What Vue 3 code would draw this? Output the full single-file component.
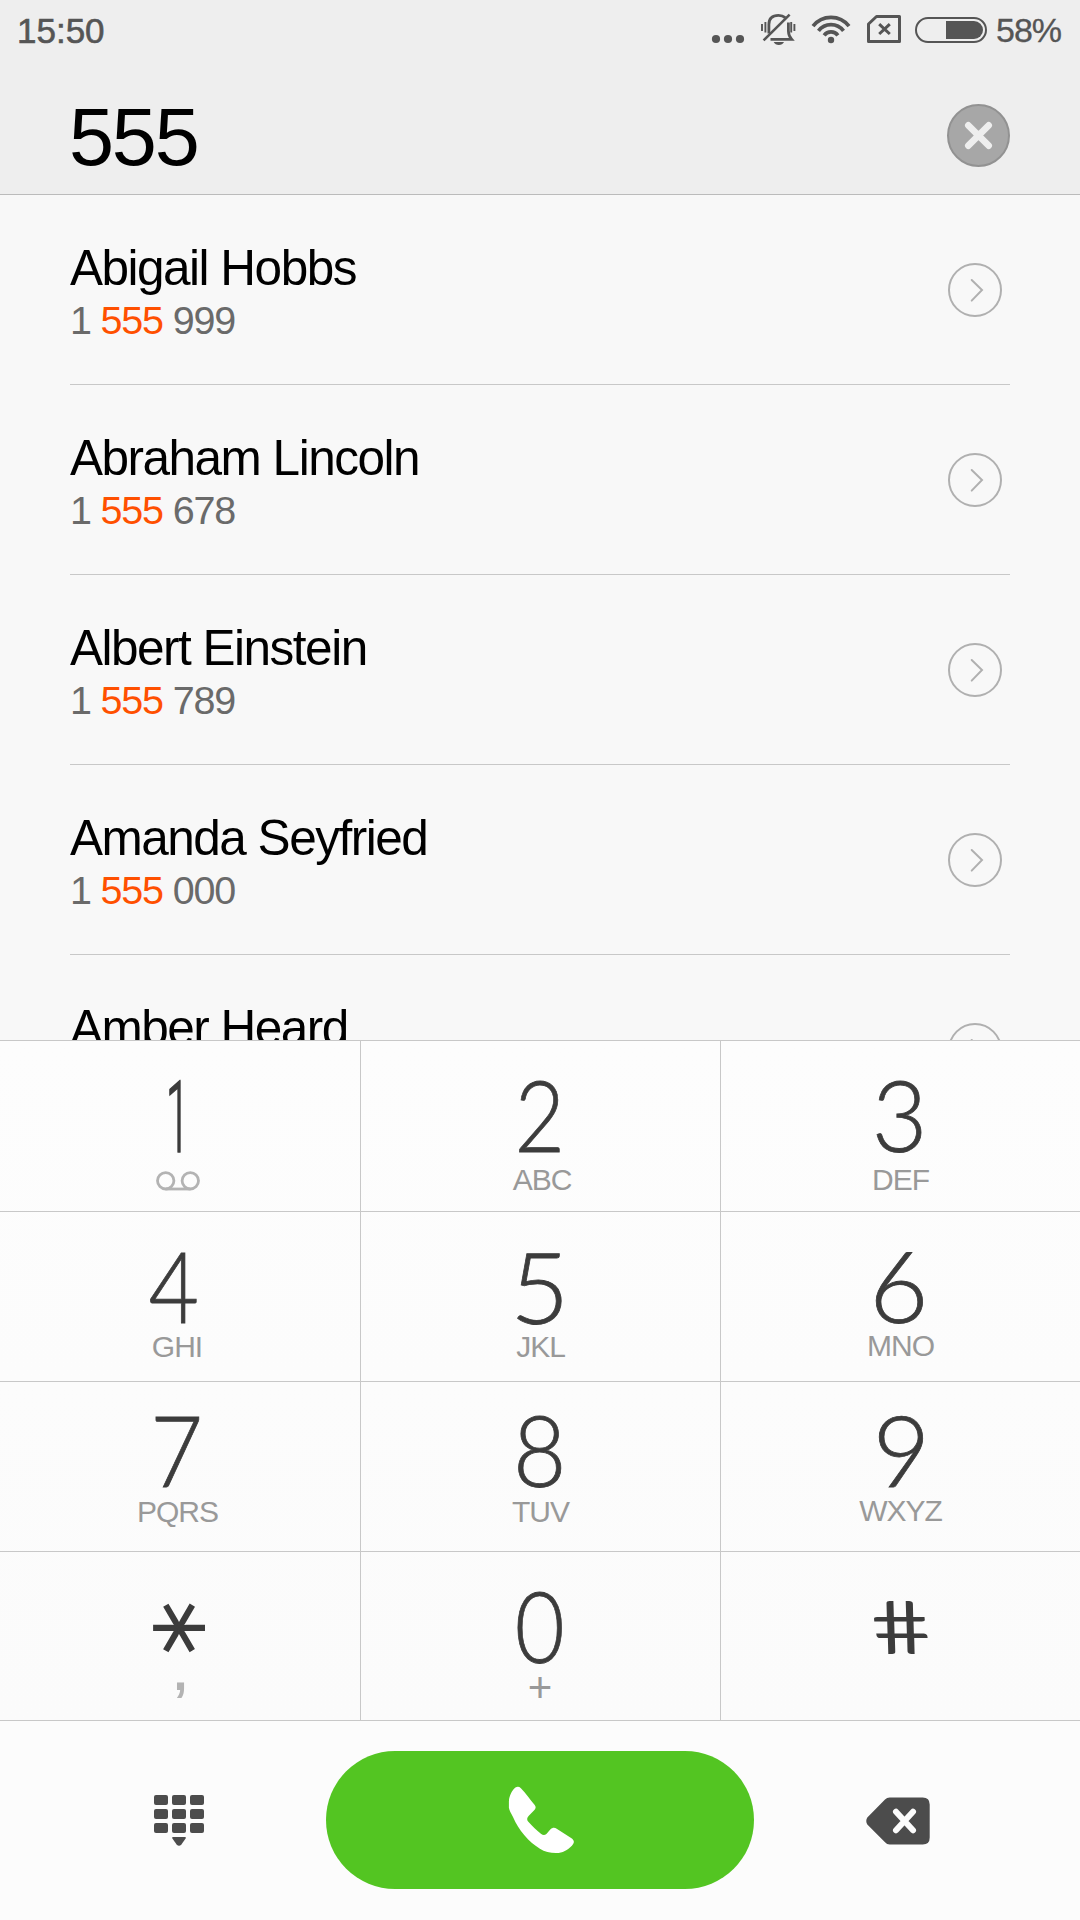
<template>
  <div class="dialer">
    <header class="header">
      <div class="status">
        <span class="clock">15:50</span>
        <div class="status-icons">
          <svg class="dots" width="34" height="50" viewBox="711 0 34 50" fill="#555">
            <circle cx="716" cy="39" r="4.1" />
            <circle cx="728" cy="39" r="4.1" />
            <circle cx="740" cy="39" r="4.1" />
          </svg>
          <svg class="bell" width="36" height="50" viewBox="760 0 36 50" fill="none" stroke="#555" stroke-width="2.8">
            <path d="M768.9 33.5 V24.5 Q768.9 15.4 778.5 15.4 Q782.6 15.4 785.2 17.6" />
            <path d="M788.4 22.5 V31 Q788.6 36 791.6 39.3 H770.5" />
            <path d="M789.6 14.6 L763.6 40.4" stroke-width="2.6" />
            <path d="M762 24 V31 M765.4 22 V32.6 M791.2 22 V32.6 M794.4 24 V31" stroke-width="1.9" />
            <path d="M773.7 42 H784 Q782.5 45 778.8 45 Q775.2 45 773.7 42 Z" fill="#555" stroke="none" />
          </svg>
          <svg class="wifi" width="40" height="50" viewBox="811 0 40 50" fill="none" stroke="#555" stroke-width="3.7">
            <path d="M813 26.2 A22.8 22.8 0 0 1 849 26.2" />
            <path d="M818.5 30.9 A15.6 15.6 0 0 1 843.5 30.9" />
            <path d="M824.1 35.3 A8.7 8.7 0 0 1 837.9 35.3" />
            <circle cx="831" cy="40" r="3.2" fill="#555" stroke="none" />
          </svg>
          <svg class="sim" width="34" height="50" viewBox="867 0 34 50" fill="none" stroke="#555" stroke-width="3">
            <path d="M868.5 24 L876.5 16.5 H899.5 V41.5 H868.5 Z" stroke-linejoin="round" />
            <path d="M879.2 24.2 L889.8 34 M889.8 24.2 L879.2 34" />
          </svg>
          <svg class="battery" width="72" height="50" viewBox="915 0 72 50">
            <rect x="916" y="18" width="70" height="24" rx="12" fill="none" stroke="#555" stroke-width="2" />
            <path d="M946 21 H974 A9 9 0 0 1 974 39 H946 Z" fill="#555" />
          </svg>
          <span class="percent">58%</span>
        </div>
      </div>
      <div class="search">
        <span class="query">{{ query }}</span>
        <svg class="clear" width="63" height="63" viewBox="0 0 63 63">
          <circle cx="31.5" cy="31.5" r="30.5" fill="#a7a7a7" stroke="#929292" stroke-width="2" />
          <path d="M21.3 21.3 L41.7 41.7 M41.7 21.3 L21.3 41.7" stroke="#eee" stroke-width="6.6" stroke-linecap="round" />
        </svg>
      </div>
    </header>

    <main class="contacts">
      <div v-for="c in contacts" :key="c.name" class="contact">
        <div class="info">
          <div class="name">{{ c.name }}</div>
          <div v-if="c.tail" class="phone">1 <em>{{ query }}</em> {{ c.tail }}</div>
        </div>
        <svg class="more" width="54" height="54" viewBox="0 0 54 54" fill="none" stroke="#b0b0b0" stroke-width="2">
          <circle cx="27" cy="27" r="26" />
          <path d="M23.7 17 L34 27 L23.7 37.6" stroke-linecap="round" />
        </svg>
      </div>
    </main>

    <section class="keypad">
      <div v-for="(row, r) in rows" :key="r" class="key-row" :class="'row-' + (r + 1)">
        <button v-for="k in row" :key="k.key" class="key" :class="k.cls" @click="press(k.key)">
          <span class="digit">{{ k.key }}</span>
          <svg v-if="k.voicemail" class="voicemail" width="44" height="20" viewBox="0 0 44 20" fill="none" stroke="#b3b3b3" stroke-width="2.8">
            <circle cx="9.7" cy="9.8" r="8.2" />
            <circle cx="34.3" cy="9.8" r="8.2" />
            <path d="M9.7 18 H34.3" />
          </svg>
          <span v-else-if="k.letters" class="letters">{{ k.letters }}</span>
        </button>
      </div>
    </section>

    <footer class="actions">
      <svg class="hide-pad" width="50" height="52" viewBox="0 0 50 52" fill="#4c4c4c">
        <template v-for="y in 3" :key="y">
          <rect v-for="x in 3" :key="x" :x="(x - 1) * 18" :y="(y - 1) * 14" width="14" height="10" rx="2" />
        </template>
        <path d="M18.8 42 H31.2 Q32.4 42 31.6 43.6 L27.4 49.6 Q25 52 22.6 49.6 L18.4 43.6 Q17.6 42 18.8 42 Z" />
      </svg>
      <button class="call">
        <svg width="67" height="68" viewBox="0 0 67 68" fill="#fff">
          <path d="M.9 15 C1.2 10 4.5 3.6 7.4 1.6 C9.4 .4 11.2 .6 12.9 2.3 C17.5 7 22 13.5 26.7 19 C28.2 21 28 22.6 25.7 24.7 L20.8 29.7 C18.6 32 18.6 34 20.8 36.3 C24.5 40.5 28.5 44.3 32.9 47.7 C35 49.3 36.5 49.4 38.4 48 L42.5 43.3 C44.8 41.2 46.6 41.3 49.1 43 L63.5 52.3 C66.4 54.6 66.8 56.7 63.9 59.7 C59.5 64.4 54 67.2 48 67 C42 67 36.5 65.6 31.9 62.7 C26 59.2 21 54.7 16.4 49.3 C11.5 43.6 8 37.8 5 31 C3 27 1.3 24.5 .9 21.7 Z" />
        </svg>
      </button>
      <svg class="erase" width="64" height="48" viewBox="0 0 64 48">
        <path d="M1.3 20.5 L19 2.6 Q20.9 .6 23.7 .6 H56.7 Q63.7 .6 63.7 7.6 V40.4 Q63.7 47.4 56.7 47.4 H23.7 Q20.9 47.4 19 45.2 L1.3 27.5 Q-.8 24 1.3 20.5 Z" fill="#4c4c4c" />
        <path d="M30 14.8 L47 33.2 M47 14.8 L30 33.2" stroke="#fcfcfc" stroke-width="6" stroke-linecap="round" />
      </svg>
    </footer>
  </div>
</template>

<script setup>
import { ref } from 'vue'

const query = ref('555')

const contacts = [
  { name: 'Abigail Hobbs', tail: '999' },
  { name: 'Abraham Lincoln', tail: '678' },
  { name: 'Albert Einstein', tail: '789' },
  { name: 'Amanda Seyfried', tail: '000' },
  { name: 'Amber Heard' },
]

const rows = [
  [
    { key: '1', voicemail: true, cls: 'one' },
    { key: '2', letters: 'ABC', cls: 'two' },
    { key: '3', letters: 'DEF', cls: 'three' },
  ],
  [
    { key: '4', letters: 'GHI', cls: 'four' },
    { key: '5', letters: 'JKL', cls: 'five' },
    { key: '6', letters: 'MNO', cls: 'six' },
  ],
  [
    { key: '7', letters: 'PQRS', cls: 'seven' },
    { key: '8', letters: 'TUV', cls: 'eight' },
    { key: '9', letters: 'WXYZ', cls: 'nine' },
  ],
  [
    { key: '*', letters: ',', cls: 'star' },
    { key: '0', letters: '+', cls: 'zero' },
    { key: '#', cls: 'hash' },
  ],
]

function press(key) {
  query.value += key
}
</script>

<style>
body {
  margin: 0;
  background: #f7f7f7;
}
</style>

<style scoped>
.dialer {
  width: 1080px;
  height: 1920px;
  display: flex;
  flex-direction: column;
  overflow: hidden;
  background: #f8f8f8;
  font-family: "Liberation Sans", Arial, sans-serif;
}

.header {
  flex: none;
  height: 194px;
  background: #eee;
  border-bottom: 1px solid #bbb;
}

.status {
  height: 60px;
  display: flex;
  justify-content: space-between;
  align-items: flex-start;
  padding: 0 18px 0 17px;
  color: #555;
}

.clock {
  margin-top: 11px;
  font-size: 35px;
  line-height: 40px;
  -webkit-text-stroke: 0.6px #555;
}

.status-icons {
  display: flex;
}

.bell,
.wifi {
  margin-left: 15px;
}

.sim {
  margin-left: 16px;
}

.battery {
  margin-left: 14px;
}

.percent {
  width: 66px;
  margin: 10px 0 0 9px;
  font-size: 34px;
  line-height: 40px;
  letter-spacing: -1px;
  -webkit-text-stroke: 0.3px #555;
}

.search {
  height: 134px;
  display: flex;
  justify-content: space-between;
  align-items: flex-start;
  padding: 0 70px;
}

.query {
  margin: 31px 0 0 -1px;
  font-size: 81px;
  line-height: 92px;
  letter-spacing: -2.2px;
  color: #000;
}

.clear {
  margin-top: 44px;
}

.contacts {
  flex: none;
  height: 845px;
  padding: 0 70px;
  overflow: hidden;
}

.contact {
  box-sizing: border-box;
  height: 190px;
  display: flex;
  justify-content: space-between;
  border-bottom: 1px solid #c8c8c8;
}

.info {
  padding-top: 44px;
}

.name {
  font-size: 49.5px;
  line-height: 57px;
  letter-spacing: -1.5px;
  color: #000;
}

.phone {
  margin-top: 1px;
  font-size: 39.5px;
  line-height: 46px;
  letter-spacing: -1.2px;
  color: #6a6a6a;
}

.phone em {
  font-style: normal;
  color: #ff5000;
}

.more {
  margin: 68px 8px 0 0;
}

.keypad {
  flex: none;
  border-top: 1px solid #c8c8c8;
  background: linear-gradient(#fdfdfd, #fbfbfb);
}

.key-row {
  box-sizing: border-box;
  height: 170px;
  display: grid;
  grid-template-columns: 361px 360px 359px;
  border-bottom: 1px solid #c8c8c8;
}

.row-1 {
  height: 171px;
}

.row-4 {
  height: 169px;
}

.key {
  display: flex;
  flex-direction: column;
  align-items: center;
  padding: 0;
  border: none;
  border-right: 1px solid #c8c8c8;
  background: none;
  font-family: inherit;
}

.key:last-child {
  border-right: none;
}

.digit {
  height: 72px;
  margin-top: 37px;
  font-family: Lato, sans-serif;
  font-size: 99px;
  font-weight: 300;
  line-height: 72px;
  color: #3c3c3c;
  -webkit-text-stroke: 0.8px #3c3c3c;
  transform: translateX(-1px) scaleX(0.88);
}

.letters {
  margin-top: 13px;
  font-size: 30px;
  line-height: 34px;
  letter-spacing: -1px;
  color: #999;
}

.voicemail {
  margin: 21px 4px 0 0;
}

.row-2 .letters {
  margin-top: 9px;
}

.row-3 .digit {
  margin-top: 31px;
}

.row-3 .letters {
  margin-top: 10px;
}

.row-4 .digit {
  margin-top: 38px;
}

.key.one .digit {
  font-family: Roboto, sans-serif;
  font-size: 100px;
  -webkit-text-stroke-width: 1.6px;
  transform: translate(-2px, 4px) scaleX(0.42);
}

.key.two .letters {
  margin-left: 3px;
}

.key.three .digit {
  transform: translateX(-1px) scaleX(0.97);
}

.key.four .digit {
  transform: translateX(-6px) scaleX(0.88);
}

.key.four .letters {
  margin-right: 6px;
}

.key.five .digit {
  transform: translate(-1px, 1px) scaleX(1.03);
}

.key.six .digit {
  transform: translateX(-2px) scaleX(1.03);
}

.key.six .letters,
.key.nine .letters {
  position: relative;
  top: -1px;
}

.key.seven .digit {
  transform: translateX(-3px) scaleX(0.92);
}

.key.seven .letters {
  margin-right: 5px;
}

.key.eight .digit {
  transform: translateX(-1px) scaleX(0.93);
}

.key.nine .digit {
  transform: translateX(1px) scaleX(1);
}

/* the font's asterisk stands upright, the key wants a level arm */
.key.star .digit {
  font-size: 168px;
  -webkit-text-stroke-width: 1.8px;
  transform: translate(-36px, 2px) rotate(90deg);
}

.key.star .letters {
  margin-top: -6px;
  font-size: 50px;
  font-weight: bold;
  color: #b3b3b3;
}

.key.zero .digit {
  transform: translate(-1px, -1px) scaleX(0.87);
}

.key.zero .letters {
  margin: 9px 2px 0 0;
  font-size: 42px;
}

.key.hash .digit {
  font-size: 72px;
  -webkit-text-stroke-width: 2px;
  transform: translate(-1px, -1px) scaleX(1.42) skewX(13deg);
}

.actions {
  flex: 1;
  display: flex;
  align-items: flex-start;
  padding: 30px 150px 0 154px;
  background: #fcfcfc;
}

.hide-pad {
  margin-top: 44px;
}

.call {
  width: 428px;
  height: 138px;
  margin: 0 112px 0 122px;
  display: flex;
  align-items: center;
  justify-content: center;
  padding: 0 0 0 3px;
  border: none;
  border-radius: 69px;
  background: #53c522;
}

.erase {
  margin-top: 46px;
}
</style>
